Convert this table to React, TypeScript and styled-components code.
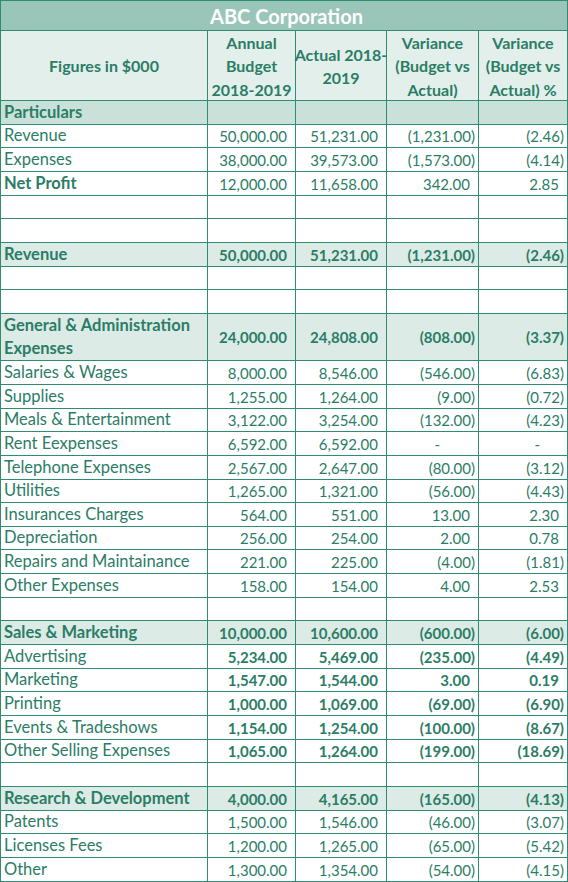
import React from "react"
import styled, { createGlobalStyle, css } from "styled-components"

const GREEN = "#2b7d66"
const LINE = "#2f8c72"
const ROW_H = 23.66

const GlobalStyle = createGlobalStyle`
  html, body {
    margin: 0;
    padding: 0;
    background: #ffffff;
  }
  body {
    font-family: Lato, "Open Sans", "Liberation Sans", sans-serif;
    font-size: 15px;
    color: ${GREEN};
  }
`

type Tone = "plain" | "section" | "particulars"

interface Row {
  label?: string
  values?: string[]
  tone?: Tone
  boldLabel?: boolean
  boldValues?: boolean
  span?: number
}

const rows: Row[] = [
  { label: "Particulars", tone: "particulars", boldLabel: true },
  { label: "Revenue", values: ["50,000.00", "51,231.00", "(1,231.00)", "(2.46)"] },
  { label: "Expenses", values: ["38,000.00", "39,573.00", "(1,573.00)", "(4.14)"] },
  { label: "Net Profit", values: ["12,000.00", "11,658.00", "342.00", "2.85"], boldLabel: true },
  {},
  {},
  {
    label: "Revenue",
    values: ["50,000.00", "51,231.00", "(1,231.00)", "(2.46)"],
    tone: "section",
    boldLabel: true,
    boldValues: true,
  },
  {},
  {},
  {
    label: "General & Administration Expenses",
    values: ["24,000.00", "24,808.00", "(808.00)", "(3.37)"],
    tone: "section",
    boldLabel: true,
    boldValues: true,
    span: 2,
  },
  { label: "Salaries & Wages", values: ["8,000.00", "8,546.00", "(546.00)", "(6.83)"] },
  { label: "Supplies", values: ["1,255.00", "1,264.00", "(9.00)", "(0.72)"] },
  { label: "Meals & Entertainment", values: ["3,122.00", "3,254.00", "(132.00)", "(4.23)"] },
  { label: "Rent Eexpenses", values: ["6,592.00", "6,592.00", "-", "-"] },
  { label: "Telephone Expenses", values: ["2,567.00", "2,647.00", "(80.00)", "(3.12)"] },
  { label: "Utilities", values: ["1,265.00", "1,321.00", "(56.00)", "(4.43)"] },
  { label: "Insurances Charges", values: ["564.00", "551.00", "13.00", "2.30"] },
  { label: "Depreciation", values: ["256.00", "254.00", "2.00", "0.78"] },
  { label: "Repairs and Maintainance", values: ["221.00", "225.00", "(4.00)", "(1.81)"] },
  { label: "Other Expenses", values: ["158.00", "154.00", "4.00", "2.53"] },
  {},
  {
    label: "Sales & Marketing",
    values: ["10,000.00", "10,600.00", "(600.00)", "(6.00)"],
    tone: "section",
    boldLabel: true,
    boldValues: true,
  },
  { label: "Advertising", values: ["5,234.00", "5,469.00", "(235.00)", "(4.49)"], boldValues: true },
  { label: "Marketing", values: ["1,547.00", "1,544.00", "3.00", "0.19"], boldValues: true },
  { label: "Printing", values: ["1,000.00", "1,069.00", "(69.00)", "(6.90)"], boldValues: true },
  { label: "Events & Tradeshows", values: ["1,154.00", "1,254.00", "(100.00)", "(8.67)"], boldValues: true },
  { label: "Other Selling Expenses", values: ["1,065.00", "1,264.00", "(199.00)", "(18.69)"], boldValues: true },
  {},
  {
    label: "Research & Development",
    values: ["4,000.00", "4,165.00", "(165.00)", "(4.13)"],
    tone: "section",
    boldLabel: true,
    boldValues: true,
  },
  { label: "Patents", values: ["1,500.00", "1,546.00", "(46.00)", "(3.07)"] },
  { label: "Licenses Fees", values: ["1,200.00", "1,265.00", "(65.00)", "(5.42)"] },
  { label: "Other", values: ["1,300.00", "1,354.00", "(54.00)", "(4.15)"] },
]

const toneBg = (tone?: Tone) =>
  tone === "particulars" ? "#c9e1d9" : tone === "section" ? "#dcebe6" : "#ffffff"

const Sheet = styled.div`
  display: grid;
  grid-template-columns: 207px 88px 91px 92px 89px;
  width: 568px;
  box-sizing: border-box;
  border-left: 1px solid ${LINE};
  border-top: 1px solid ${LINE};
`

const cellBase = css`
  box-sizing: border-box;
  border-right: 1px solid ${LINE};
  border-bottom: 1px solid ${LINE};
  display: flex;
  white-space: nowrap;
`

const TitleCell = styled.div`
  ${cellBase};
  grid-column: 1 / -1;
  height: 30px;
  align-items: center;
  justify-content: center;
  background: #9ac6b9;
  color: #ffffff;
  font-weight: 700;
  font-size: 20px;
  padding: 1px 0 0 5px;
`

const HeadCell = styled.div`
  ${cellBase};
  height: 70px;
  flex-direction: column;
  align-items: center;
  justify-content: center;
  background: #e2efeb;
  font-weight: 700;
  font-size: 16px;
  line-height: 23.5px;
  padding-top: 1px;
`

const LabelCell = styled.div<{ $bg: string; $bold?: boolean; $span: number }>`
  ${cellBase};
  height: ${(p) => ROW_H * p.$span}px;
  align-items: ${(p) => (p.$span > 1 ? "center" : "flex-end")};
  padding: 0 3px;
  background: ${(p) => p.$bg};
  font-weight: ${(p) => (p.$bold ? 700 : 400)};
  font-size: 16.5px;
  white-space: ${(p) => (p.$span > 1 ? "normal" : "nowrap")};
  line-height: 23px;
  overflow: hidden;
`

const NumCell = styled.div<{ $bg: string; $bold?: boolean; $span: number; $pad: number }>`
  ${cellBase};
  height: ${(p) => ROW_H * p.$span}px;
  align-items: ${(p) => (p.$span > 1 ? "center" : "flex-end")};
  justify-content: flex-end;
  padding: 0 ${(p) => p.$pad}px 0 3px;
  background: ${(p) => p.$bg};
  font-weight: ${(p) => (p.$bold ? 700 : 400)};
  line-height: 22px;
  overflow: hidden;
`

const padFor = (value: string, col: number) => {
  if (value === "-") return col === 2 ? 38 : 27
  if (value.endsWith(")")) return 3
  return 8
}

const headings: string[][] = [
  ["Figures in $000"],
  ["Annual", "Budget", "2018-2019"],
  ["Actual 2018-", "2019"],
  ["Variance", "(Budget vs", "Actual)"],
  ["Variance", "(Budget vs", "Actual) %"],
]

export default function App() {
  return (
    <>
      <GlobalStyle />
      <Sheet>
        <TitleCell>ABC Corporation</TitleCell>
        {headings.map((lines) => (
          <HeadCell key={lines.join(" ")}>
            {lines.map((l) => (
              <span key={l}>{l}</span>
            ))}
          </HeadCell>
        ))}
        {rows.map((row, i) => {
          const bg = toneBg(row.tone)
          const span = row.span ?? 1
          const values = row.values ?? ["", "", "", ""]
          return (
            <React.Fragment key={i}>
              <LabelCell $bg={bg} $bold={row.boldLabel} $span={span}>
                {row.label ?? ""}
              </LabelCell>
              {values.map((v, c) => (
                <NumCell key={c} $bg={bg} $bold={row.boldValues} $span={span} $pad={padFor(v, c)}>
                  {v}
                </NumCell>
              ))}
            </React.Fragment>
          )
        })}
      </Sheet>
    </>
  )
}
